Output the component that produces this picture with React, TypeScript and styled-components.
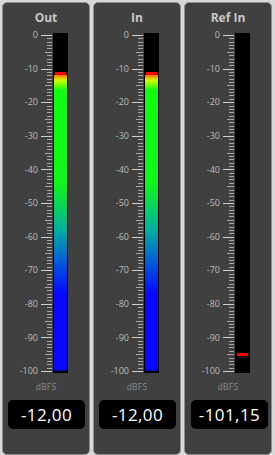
import styled, { createGlobalStyle } from 'styled-components'

const GlobalStyle = createGlobalStyle`
  html, body {
    margin: 0;
    padding: 0;
    background: #d8d8d8;
  }
  body {
    font-family: 'Open Sans', 'Liberation Sans', sans-serif;
  }
`

// meter geometry
const BAR_H = 340
const TOP = 2
const PX_PER_DB = 3.36
const dbToY = (db: number) => TOP + -db * PX_PER_DB

const Page = styled.div`
  display: flex;
  gap: 3px;
  padding: 2px 3px 0 2px;
  height: 455px;
  box-sizing: border-box;
  overflow: hidden;
`

const Panel = styled.div`
  width: 88px;
  height: 453px;
  flex: none;
  box-sizing: border-box;
  background: #404040;
  border: 1px solid #8e8e8e;
  border-radius: 5px;
  display: flex;
  flex-direction: column;
  align-items: stretch;
`

const Title = styled.div`
  height: 30px;
  padding-top: 6px;
  box-sizing: border-box;
  text-align: center;
  font-size: 12px;
  font-weight: 700;
  color: #c8c8c8;
  line-height: 18px;
`

const MeterRow = styled.div`
  display: flex;
  align-items: flex-start;
  height: ${BAR_H}px;
`

const Scale = styled.svg`
  display: block;
  flex: none;
  overflow: visible;
`

const Bar = styled.div`
  position: relative;
  width: 15px;
  height: ${BAR_H}px;
  background: #000;
  flex: none;
  overflow: hidden;
`

const Fill = styled.div`
  position: absolute;
  left: 1px;
  right: 1px;
  bottom: 2px;
  background-image: linear-gradient(
    to bottom,
    #ff0000 0%,
    #ff2000 10.5%,
    #ff9000 12.4%,
    #d0ff00 13.6%,
    #10ff10 16.5%,
    #10f818 44%,
    #00b0a0 58%,
    #0050e0 69%,
    #0808ff 77%,
    #0808ff 100%
  );
  background-size: 100% ${BAR_H - 4}px;
  background-position: bottom;
`

const Peak = styled.div`
  position: absolute;
  left: 2px;
  right: 2px;
  height: 3px;
  background: #ff0000;
`

const Unit = styled.div`
  margin-top: 7px;
  height: 14px;
  text-align: center;
  font-size: 8.5px;
  color: #8c8c8c;
  line-height: 14px;
  letter-spacing: 0.2px;
`

const ValueBox = styled.div<{ $offset: number }>`
  margin: 6px 0 0 ${({ $offset }) => $offset}px;
  width: 77px;
  height: 29px;
  border-radius: 5px;
  background: #000;
  color: #fff;
  font-size: 17px;
  line-height: 29px;
  text-align: center;
  letter-spacing: 0.4px;
`

const ticks = Array.from({ length: 101 }, (_, i) => i)

const MeterScale = () => (
  <Scale width={50} height={BAR_H} viewBox={`0 0 50 ${BAR_H}`}>
    {ticks.map((i) => {
      const y = Math.round(dbToY(-i)) + 0.5
      const major = i % 10 === 0
      const mid = i % 5 === 0
      const x1 = major ? 38 : mid ? 42 : 44
      return (
        <line
          key={i}
          x1={x1}
          x2={49}
          y1={y}
          y2={y}
          stroke={major ? '#cfcfcf' : '#a8a8a8'}
          strokeWidth={1}
        />
      )
    })}
    {ticks
      .filter((i) => i % 10 === 0)
      .map((i) => (
        <text
          key={i}
          x={35}
          y={dbToY(-i) + 3.2}
          textAnchor="end"
          fontSize={9}
          fill="#bdbdbd"
          fontFamily="'Open Sans', sans-serif"
        >
          {i === 0 ? '0' : `-${i}`}
        </text>
      ))}
  </Scale>
)

type MeterProps = {
  title: string
  level: number
  peak: number
  value: string
  offset: number
}

const Meter = ({ title, level, peak, value, offset }: MeterProps) => {
  const fillH = level > -100 ? BAR_H - 2 - dbToY(level) : 0
  return (
    <Panel>
      <Title>{title}</Title>
      <MeterRow>
        <MeterScale />
        <Bar>
          {fillH > 0 && <Fill style={{ height: fillH }} />}
          <Peak style={{ top: dbToY(peak) - 3 }} />
        </Bar>
      </MeterRow>
      <Unit>dBFS</Unit>
      <ValueBox $offset={offset}>{value}</ValueBox>
    </Panel>
  )
}

export default function App() {
  return (
    <>
      <GlobalStyle />
      <Page>
        <Meter title="Out" level={-12} peak={-12} value="-12,00" offset={5} />
        <Meter title="In" level={-12} peak={-12} value="-12,00" offset={5} />
        <Meter title="Ref In" level={-101.15} peak={-95.6} value="-101,15" offset={6} />
      </Page>
    </>
  )
}
